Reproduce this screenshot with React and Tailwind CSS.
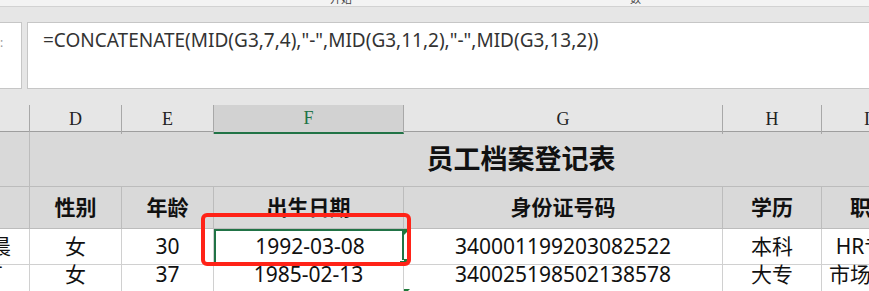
import React from "react";

const cols = "grid-cols-[30px_92px_92px_190px_319px_99px_90px]";

const rows = [
  { name: "晨", gender: "女", age: "30", birth: "1992-03-08", id: "340001199203082522", edu: "本科", job: "HR专员" },
  { name: "丁", gender: "女", age: "37", birth: "1985-02-13", id: "340025198502138578", edu: "大专", job: "市场专员" },
];

function ErrTick() {
  return (
    <span className="absolute left-0 top-0 h-0 w-0 border-l-[6px] border-b-[6px] border-l-[#1e7a3a] border-b-transparent" />
  );
}

export default function App() {
  return (
    <div
      className="relative h-[291px] w-[869px] overflow-hidden bg-[#e6e6e6]"
      style={{ fontFamily: '"Noto Sans", "Noto Sans CJK SC", sans-serif' }}
    >
      {/* ribbon leftovers */}
      <div className="relative h-[7px] border-b border-[#d2d2d2] bg-[#f3f3f3]">
        <span className="absolute left-[330px] top-[-9px] text-[11px] text-[#444]">开始</span>
        <span className="absolute left-[630px] top-[-9px] text-[11px] text-[#444]">数</span>
      </div>

      {/* formula bar */}
      <div className="flex h-[82px] gap-[5px] pt-[15px]">
        <div className="relative h-[67px] w-[22px] border border-l-0 border-[#c6c6c6] bg-white">
          <span className="absolute left-0 top-[14px] text-[12px] leading-none text-[#999]">:</span>
        </div>
        <div className="h-[67px] flex-1 border border-r-0 border-[#c6c6c6] bg-white pl-[15px] pt-[3px] text-[19px] leading-[28px] text-[#333]">
          =CONCATENATE(MID(G3,7,4),"-",MID(G3,11,2),"-",MID(G3,13,2))
        </div>
      </div>

      {/* sheet */}
      <div className="mt-[16px]">
        <div className={`grid ${cols} h-[27px] border-b border-[#9e9e9e] text-[18px] text-[#222]`} style={{ fontFamily: '"Liberation Serif", serif' }}>
          <div className="border-r border-[#a8a8a8]" />
          <div className="flex items-center justify-center border-r border-[#a8a8a8]">D</div>
          <div className="flex items-center justify-center border-r border-[#a8a8a8]">E</div>
          <div className="flex items-center justify-center border-b-2 border-r border-b-[#217346] border-r-[#a8a8a8] bg-[#d2d2d2] text-[#217346]">F</div>
          <div className="flex items-center justify-center border-r border-[#a8a8a8]">G</div>
          <div className="flex items-center justify-center border-r border-[#a8a8a8]">H</div>
          <div className="flex items-center justify-center">I</div>
        </div>

        <div className={`grid ${cols} h-[55px] bg-[#d9d9d9]`}>
          <div className="border-b border-r border-[#bcbcbc]" />
          <div className="col-span-6 flex items-center justify-center border-b border-[#bcbcbc] pl-[100px] text-[27px] font-bold text-[#111]">
            员工档案登记表
          </div>
        </div>

        <div className={`grid ${cols} h-[42px] bg-[#d9d9d9] text-[21px] font-bold text-[#111]`}>
          <div className="border-b border-r border-[#bcbcbc]" />
          <div className="flex items-center justify-center border-b border-r border-[#bcbcbc]">性别</div>
          <div className="flex items-center justify-center border-b border-r border-[#bcbcbc]">年龄</div>
          <div className="flex items-center justify-center border-b border-r border-[#bcbcbc]">出生日期</div>
          <div className="flex items-center justify-center border-b border-r border-[#bcbcbc]">身份证号码</div>
          <div className="flex items-center justify-center border-b border-r border-[#bcbcbc]">学历</div>
          <div className="flex items-center justify-center whitespace-nowrap border-b border-[#bcbcbc] pl-[8px]">职位</div>
        </div>

        {rows.map((r, i) => (
          <div key={i} className={`grid ${cols} h-[30px] bg-white text-[21px] text-[#111]`}>
            <div className="flex items-center justify-end overflow-hidden border-b border-r border-[#d0d0d0]">
              <span className={i === 0 ? "mr-[18px] whitespace-nowrap" : "mr-[26px] whitespace-nowrap"}>李{r.name}</span>
            </div>
            <div className="flex items-center justify-center border-b border-r border-[#d0d0d0]">{r.gender}</div>
            <div className="flex items-center justify-center border-b border-r border-[#d0d0d0]">{r.age}</div>
            <div
              className={
                i === 0
                  ? "relative flex items-center justify-center border-2 border-[#217346] pl-[2px]"
                  : "flex items-center justify-center border-b border-r border-[#d0d0d0]"
              }
            >
              {r.birth}
              {i === 0 && (
                <span className="absolute bottom-[-3px] right-[-3px] h-[6px] w-[6px] border border-white bg-[#217346]" />
              )}
            </div>
            <div className="relative flex items-center justify-center border-b border-r border-[#d0d0d0]">
              <ErrTick />
              {r.id}
            </div>
            <div className="flex items-center justify-center border-b border-r border-[#d0d0d0]">{r.edu}</div>
            <div className="flex items-center justify-center whitespace-nowrap border-b border-[#d0d0d0] pl-[8px]">{r.job}</div>
          </div>
        ))}
        <div className={`grid ${cols} h-[4px] bg-white`}>
          <div className="border-r border-[#d0d0d0]" />
          <div className="border-r border-[#d0d0d0]" />
          <div className="border-r border-[#d0d0d0]" />
          <div className="border-r border-[#d0d0d0]" />
          <div className="relative border-r border-[#d0d0d0]">
            <ErrTick />
          </div>
          <div className="border-r border-[#d0d0d0]" />
          <div />
        </div>
      </div>

      {/* red annotation box */}
      <div className="pointer-events-none absolute left-[201px] top-[213px] h-[53px] w-[210px] rounded-[6px] border-[4px] border-[#ff2318]" />
    </div>
  );
}
